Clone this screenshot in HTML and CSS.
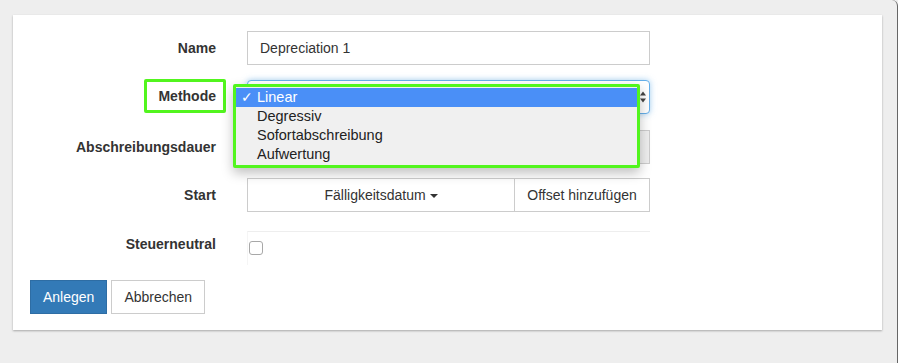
FILE: index.html
```html
<!DOCTYPE html>
<html lang="de">
<head>
    <meta charset="UTF-8">
    <meta name="viewport" content="width=device-width, initial-scale=1.0">
    <title>Abschreibung anlegen</title>
    <link rel="stylesheet" href="styles.css">
</head>
<body>
    <div class="window">
        <div class="panel">
            <form class="depr-form">
                <div class="form-row">
                    <label class="row-label" for="name">Name</label>
                    <input type="text" id="name" class="field" value="Depreciation 1">
                </div>

                <div class="form-row row-method">
                    <label class="row-label"><span class="marked">Methode</span></label>
                    <div class="select-wrap">
                        <div class="select-box">
                            <svg class="select-arrows" width="6" height="12" viewBox="0 0 6 12">
                                <path d="M0 4.5 L3 0.5 L6 4.5 Z" fill="#444"/>
                                <path d="M0 7.5 L3 11.5 L6 7.5 Z" fill="#444"/>
                            </svg>
                        </div>
                        <ul class="select-menu">
                            <li class="menu-item active"><span class="tick">&#10003;</span>Linear</li>
                            <li class="menu-item">Degressiv</li>
                            <li class="menu-item">Sofortabschreibung</li>
                            <li class="menu-item">Aufwertung</li>
                        </ul>
                    </div>
                </div>

                <div class="form-row row-duration">
                    <label class="row-label">Abschreibungsdauer</label>
                    <input type="text" class="field field-disabled" disabled>
                </div>

                <div class="form-row row-start">
                    <label class="row-label">Start</label>
                    <div class="btn-group">
                        <button type="button" class="group-btn btn-due">Fälligkeitsdatum <span class="caret"></span></button>
                        <button type="button" class="group-btn btn-offset">Offset hinzufügen</button>
                    </div>
                </div>

                <div class="form-row">
                    <label class="row-label label-check">Steuerneutral</label>
                    <div class="check-cell">
                        <input type="checkbox" class="check">
                    </div>
                </div>

                <div class="actions">
                    <button type="button" class="btn btn-primary">Anlegen</button>
                    <button type="button" class="btn btn-default">Abbrechen</button>
                </div>
            </form>
        </div>
    </div>
</body>
</html>
```

FILE: styles.css
```css
html, body {
    margin: 0;
    padding: 0;
}

body {
    font-family: "Liberation Sans", Arial, "DejaVu Sans", sans-serif;
    font-size: 14px;
    color: #333;
    background-color: #eee;
}

.window {
    width: 897px;
    height: 363px;
    overflow: hidden;
    border-right: 1px solid #666;
    border-top-right-radius: 6px;
}

.panel {
    width: 869px;
    height: 315px;
    margin: 15px 0 0 13px;
    padding: 16px 17px 0;
    box-sizing: border-box;
    background-color: #fff;
    box-shadow: 0 1px 2px rgba(0, 0, 0, 0.3);
}

.form-row {
    display: grid;
    grid-template-columns: 186px 403px;
    column-gap: 31px;
    height: 34px;
    margin-bottom: 15px;
}

.row-method {
    margin-bottom: 16px;
}

.row-duration {
    margin-bottom: 14px;
}

.row-start {
    margin-bottom: 19px;
}

.row-label {
    text-align: right;
    font-weight: bold;
    line-height: 20px;
    padding-top: 7px;
}

.label-check {
    padding-top: 3px;
}

.row-method .row-label {
    padding-top: 0;
}

.marked {
    display: inline-block;
    margin: -1px -10px 0 0;
    padding: 4px 7px 4px 11px;
    border: 3px solid #52f51e;
    border-radius: 2px;
}

.field {
    width: 100%;
    height: 34px;
    box-sizing: border-box;
    margin: 0;
    padding: 6px 12px;
    border: 1px solid #ccc;
    font: inherit;
    color: #333;
    background-color: #fff;
}

.field-disabled {
    background-color: #eee;
}

.select-wrap {
    position: relative;
}

.select-box {
    height: 34px;
    box-sizing: border-box;
    border: 1px solid #66afe9;
    border-radius: 4px;
    box-shadow: 0 0 6px rgba(102, 175, 233, 0.6);
    background-color: #fff;
}

.select-arrows {
    position: absolute;
    right: 4px;
    top: 11px;
}

.select-menu {
    position: absolute;
    left: -14px;
    top: 4px;
    width: 407px;
    height: 84px;
    box-sizing: border-box;
    margin: 0;
    padding: 1px 0;
    list-style: none;
    border: 3px solid #52f51e;
    border-radius: 2px;
    background-color: #f0f0f0;
    box-shadow: 0 5px 12px rgba(0, 0, 0, 0.25);
    font-size: 14.5px;
    z-index: 2;
}

.menu-item {
    position: relative;
    height: 19px;
    line-height: 19px;
    padding-left: 21px;
    color: #222;
}

.menu-item.active {
    background-color: #4a8ff7;
    color: #fff;
}

.tick {
    position: absolute;
    left: 5px;
    top: 0;
    font-family: "DejaVu Sans", sans-serif;
    font-size: 14px;
    font-weight: bold;
}

.btn-group {
    display: flex;
    height: 34px;
}

.group-btn {
    height: 34px;
    margin: 0;
    padding: 6px 12px;
    border: 1px solid #ccc;
    background-color: #fff;
    font: inherit;
    color: #333;
}

.btn-due {
    width: 268px;
}

.btn-offset {
    flex: 1;
    margin-left: -1px;
}

.caret {
    display: inline-block;
    width: 0;
    height: 0;
    margin-left: 0;
    vertical-align: middle;
    border-top: 4px solid #333;
    border-left: 4px solid transparent;
    border-right: 4px solid transparent;
}

.check-cell {
    height: 34px;
    box-sizing: border-box;
    border-top: 1px solid #eee;
    border-left: 1px solid #f5f5f5;
}

.check {
    -webkit-appearance: none;
    appearance: none;
    display: block;
    width: 14px;
    height: 14px;
    margin: 9px 0 0 1px;
    border: 1px solid #a8a8a8;
    border-radius: 3px;
    background-color: #fff;
}

.actions {
    display: flex;
    gap: 4px;
}

.btn {
    height: 34px;
    padding: 6px 12px;
    border: 1px solid transparent;
    font: inherit;
    line-height: 20px;
    cursor: pointer;
}

.btn-primary {
    background-color: #337ab7;
    border-color: #2e6da4;
    color: #fff;
}

.btn-default {
    background-color: #fff;
    border-color: #ccc;
    color: #333;
}
```
